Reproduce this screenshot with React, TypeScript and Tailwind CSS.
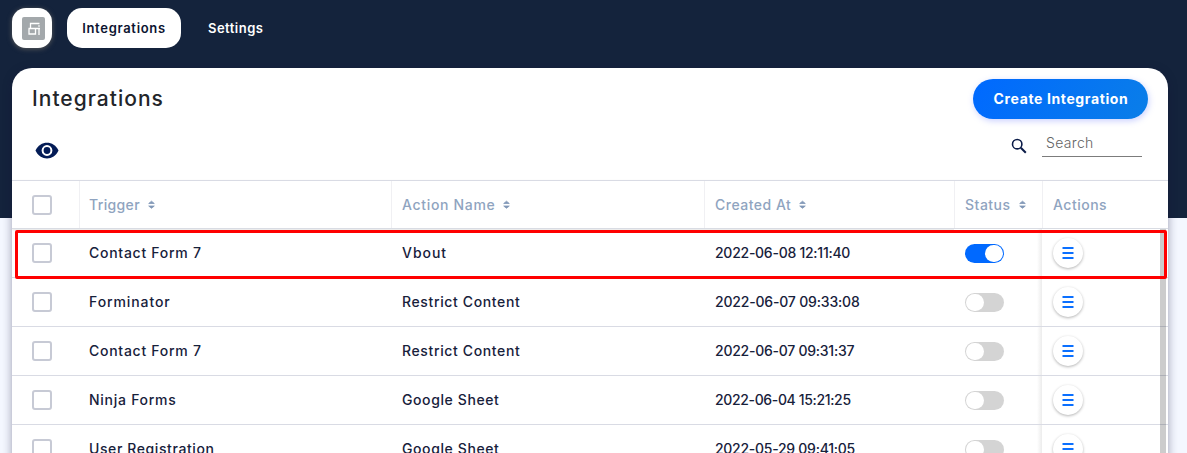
import React from 'react';

type Cell = { text: string; track: string };
type Row = { trigger: Cell; action: Cell; date: Cell; on?: boolean };

const c = (text: string, track: string): Cell => ({ text, track });

const rows: Row[] = [
  {
    trigger: c('Contact Form 7', 'tracking-[0.73px]'),
    action: c('Vbout', 'tracking-[0.95px]'),
    date: c('2022-06-08 12:11:40', 'tracking-[-0.26px]'),
    on: true,
  },
  {
    trigger: c('Forminator', 'tracking-[0.9px]'),
    action: c('Restrict Content', 'tracking-[0.63px]'),
    date: c('2022-06-07 09:33:08', 'tracking-[-0.18px]'),
  },
  {
    trigger: c('Contact Form 7', 'tracking-[0.73px]'),
    action: c('Restrict Content', 'tracking-[0.63px]'),
    date: c('2022-06-07 09:31:37', 'tracking-[-0.25px]'),
  },
  {
    trigger: c('Ninja Forms', 'tracking-[0.73px]'),
    action: c('Google Sheet', 'tracking-[0.6px]'),
    date: c('2022-06-04 15:21:25', 'tracking-[-0.35px]'),
  },
  {
    trigger: c('User Registration', 'tracking-[0.6px]'),
    action: c('Google Sheet', 'tracking-[0.6px]'),
    date: c('2022-05-29 09:41:05', 'tracking-[-0.27px]'),
  },
];

const columns = 'grid grid-cols-[67px_312px_313px_250px_88px_1fr]';

function Logo() {
  return (
    <svg width="23" height="23" viewBox="0 0 23 23" fill="none">
      <rect width="23" height="23" rx="2" fill="#a3a8ab" />
      <path d="M17.500 6.500H8.500V11.500M6.500 11.500H18M7 11.500V17H13.500V11.500M17 11.500V18" stroke="#fff" strokeWidth="1.300" />
      <path d="M16.300 8.300h1.400v1.500h-1.400z" fill="#fff" />
    </svg>
  );
}

function Checkbox() {
  return <span className="block size-5 rounded-[3px] border-2 border-[#c7cad5] bg-white" />;
}

function SortIcon() {
  return (
    <svg width="7" height="9" viewBox="0 0 7 9" fill="#8298b8" stroke="#8298b8" strokeWidth="0.8" strokeLinejoin="round">
      <path d="M3.500 1.200L6.300 3.500H0.700zM3.500 8.300L0.700 6h5.600z" />
    </svg>
  );
}

function HeaderCell({ label, track, sortable = true }: { label: string; track: string; sortable?: boolean }) {
  return (
    <div className="flex items-center gap-2 border-l border-[#f0f0f3] pl-[9px] [&:not(:nth-child(2))]:pl-[10px]">
      <span className={`whitespace-nowrap text-sm font-medium text-[#8fa4c0] ${track}`}>{label}</span>
      {sortable && <SortIcon />}
    </div>
  );
}

function TextCell({ cell }: { cell: Cell }) {
  return (
    <div className="flex items-center pl-[10px] [&:not(:nth-child(2))]:pl-[11px]">
      <span className={`whitespace-nowrap ${cell.track}`}>{cell.text}</span>
    </div>
  );
}

function Toggle({ on }: { on?: boolean }) {
  return (
    <span
      className={`flex h-[19px] w-[39px] items-center rounded-full p-px ${on ? 'justify-end bg-[#0069ff]' : 'justify-start bg-[#d4d4d4]'}`}
    >
      <span className="h-[17px] w-[18px] rounded-full bg-white" />
    </span>
  );
}

export default function App() {
  return (
    <div className="relative h-[453px] w-full overflow-hidden bg-[linear-gradient(#14233c_218px,#f4f7ff_218px)] font-['Inter',sans-serif]">
      <nav className="flex h-[68px] items-start pl-3 pt-2 text-[13px] font-semibold">
        <div className="flex size-10 items-center justify-center rounded-[14px] bg-white pl-[3px] shadow-[0_1px_5px_#5b5b5b]">
          <Logo />
        </div>
        <div className="ml-[15px] flex h-10 w-[114px] items-center justify-center rounded-[15px] bg-white pt-px text-[#0c1430]">
          <span className="tracking-[0.7px]">Integrations</span>
        </div>
        <div className="ml-[27px] flex h-10 items-center pt-px text-white">
          <span className="tracking-[0.48px]">Settings</span>
        </div>
      </nav>

      <main className="ml-3 h-[500px] w-[1156px] overflow-hidden rounded-t-[20px] bg-white shadow-[0_2px_10px_#14143a66]">
        <div className="flex h-[112px] justify-between pl-5 pr-5">
          <div className="flex flex-col">
            <h1 className="mt-[16px] text-[21px] font-medium leading-[30px] tracking-[1.02px] text-[#232529]">Integrations</h1>
            <svg className="ml-[3px] mt-[23px]" width="25" height="28" viewBox="0 0 25 28" fill="none">
              <path d="M0.500 13.500C5 3 19 3 23.500 13.500C19 24 5 24 0.500 13.500z" fill="#041c56" />
              <circle cx="12" cy="13.500" r="4.400" stroke="#fff" strokeWidth="2" />
            </svg>
          </div>
          <div className="flex flex-col items-end">
            <button className="mt-[11px] flex h-10 w-[175px] items-center justify-center rounded-full bg-[linear-gradient(120deg,#0069ff,#0a7ee8)] text-sm font-bold text-white shadow-[1px_2px_6px_#7d8cff66]">
              <span className="whitespace-nowrap pl-px tracking-[0.62px]">Create Integration</span>
            </button>
            <div className="mr-[6px] mt-[7px] flex items-start">
              <svg className="mr-[14px] mt-[11px]" width="18" height="18" viewBox="0 0 18 18" fill="none" stroke="#0b1c48">
                <circle cx="7.200" cy="7.200" r="4.700" strokeWidth="1.600" />
                <path d="M10.800 10.800l5 5" strokeWidth="2" />
              </svg>
              <div className="flex h-[31px] w-[100px] items-center border-b border-[#7c7c7c] pl-1 pt-[4px]">
                <span className="text-sm font-light tracking-[0.33px] text-[#646464]">Search</span>
              </div>
            </div>
          </div>
        </div>

        <div className={`${columns} h-[49px] border-b border-t border-b-[#d9dce3] border-t-[#d9dbe4] shadow-[0_1px_2px_#0000001c]`}>
          <div className="flex items-center pl-5">
            <Checkbox />
          </div>
          <HeaderCell label="Trigger" track="tracking-[0.35px]" />
          <HeaderCell label="Action Name" track="tracking-[0.68px]" />
          <HeaderCell label="Created At" track="tracking-[0.5px]" />
          <HeaderCell label="Status" track="tracking-[0.5px]" />
          <HeaderCell label="Actions" track="tracking-[0.5px]" sortable={false} />
        </div>

        {rows.map((row, i) => (
          <div key={i} className={`${columns} h-[49px] border-b border-[#d9dbe4] text-sm font-medium text-[#17213b]`}>
            <div className="flex items-center pl-5">
              <Checkbox />
            </div>
            <TextCell cell={row.trigger} />
            <TextCell cell={row.action} />
            <TextCell cell={row.date} />
            <div className="flex items-center bg-[linear-gradient(270deg,#ececec,#fff_5px)] pl-[11px] pt-px">
              <Toggle on={row.on} />
            </div>
            <div className="flex items-center bg-white pl-[11px]">
              <span className="flex size-[30px] items-center justify-center rounded-full bg-white shadow-[0_1px_3px_#0000004d]">
                <svg width="12" height="12" viewBox="0 0 12 12" fill="#0b70ff">
                  <path d="M0.500 0h11v2h-11zM0.500 5h11v2h-11zM0.500 10h11v2h-11z" />
                </svg>
              </span>
            </div>
          </div>
        ))}
      </main>

      <div className="absolute left-[1160px] top-[229px] h-[224px] w-[6px] bg-black/20" />
      <div className="absolute left-[15px] top-[230px] h-[49px] w-[1152px] rounded-[2px] border-[3px] border-[#ff0000]" />
    </div>
  );
}
